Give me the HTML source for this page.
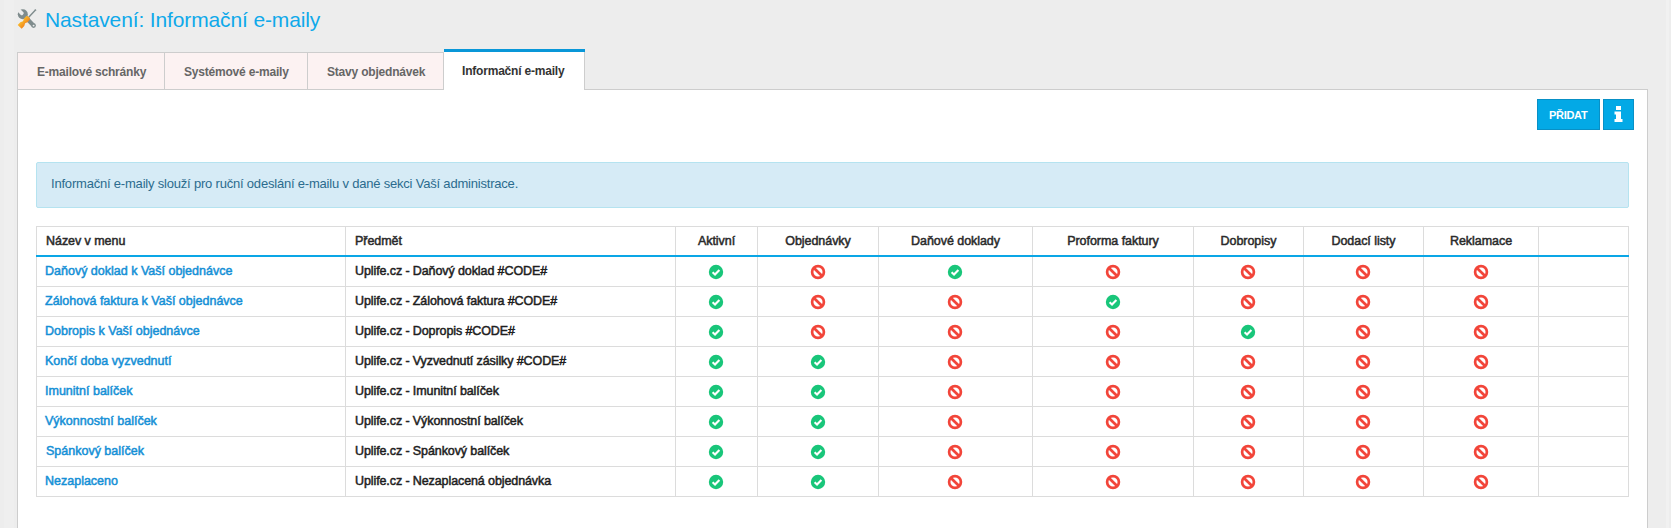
<!DOCTYPE html>
<html><head><meta charset="utf-8"><title>Nastavení: Informační e-maily</title>
<style>
html,body{margin:0;padding:0}
body{width:1671px;height:528px;overflow:hidden;background:#ededed;position:relative;font-family:"Liberation Sans",sans-serif}
.a{position:absolute}
.t{position:absolute;white-space:nowrap;line-height:14px}
.title{position:absolute;left:45px;top:8px;font-size:21px;letter-spacing:-0.13px;line-height:24px;color:#0fa9ea;white-space:nowrap}
.panel{position:absolute;left:17px;top:89px;width:1629px;height:460px;background:#fff;border:1px solid #cdcdcd}
.tab{position:absolute;top:52px;height:36px;background:#fcf2f2;border:1px solid #cdcdcd;border-right:none;border-bottom:none}
.tabt{position:absolute;font-size:12px;font-weight:bold;color:#666;letter-spacing:-0.2px;white-space:nowrap;line-height:14px}
.btn{position:absolute;top:99px;height:29px;background:#03a9e6;border:1px solid #0890c6}
.info{position:absolute;left:36px;top:162px;width:1591px;height:44px;background:#d6ebf6;border:1px solid #b5e3f0;border-radius:2px;box-sizing:content-box}
.hl{position:absolute;height:1px;background:#dcdcdc}
.vl{position:absolute;width:1px;background:#dcdcdc}
.hd{font-size:12.5px;color:#2a2a2a;letter-spacing:-0.05px;-webkit-text-stroke:0.5px #2a2a2a}
.lk{font-size:12.5px;color:#1590d6;letter-spacing:0px;-webkit-text-stroke:0.5px #1590d6}
.sb{font-size:12.5px;color:#1e1e1e;letter-spacing:-0.1px;-webkit-text-stroke:0.5px #1e1e1e}
.ic{position:absolute;display:block}
</style></head><body>

<svg class="a" style="left:16px;top:7px" width="24" height="24" viewBox="16 7 24 24">
<defs><mask id="wm" maskUnits="userSpaceOnUse" x="16" y="7" width="24" height="24">
<rect x="16" y="7" width="24" height="24" fill="#fff"/>
<g transform="translate(22.8,14.3) rotate(-45)"><rect x="-1.8" y="-8" width="3.6" height="8.3" rx="1.6" fill="#000"/></g>
<circle cx="33.6" cy="25.6" r="0.95" fill="#000"/>
</mask>
<linearGradient id="og" x1="0" y1="-3" x2="0" y2="3" gradientUnits="userSpaceOnUse"><stop offset="0" stop-color="#f9bb2c"/><stop offset="1" stop-color="#f2861c"/></linearGradient></defs>
<g fill="#7f8c8d" mask="url(#wm)">
<circle cx="22.8" cy="14.3" r="5"/>
<path d="M22.8 14.3 L33.6 25.6" stroke="#7f8c8d" stroke-width="4.2"/>
<circle cx="33.6" cy="25.6" r="2.3"/>
</g>
<g transform="translate(20.5,26) rotate(-47)">
<path d="M12 -0.7 L21.6 -0.7 L22.2 -1.1 L22.7 0 L22.2 1.1 L21.6 0.7 L12 0.7 Z" fill="#7f8c8d"/>
<path d="M-1.2 -2.7 L2.6 -2.7 L5.2 -1.45 L7.6 -2.5 L11.2 -2.5 L12.2 -1.3 L12.2 1.3 L11.2 2.5 L7.6 2.5 L5.2 1.45 L2.6 2.7 L-1.2 2.7 Z" fill="url(#og)"/>
</g>
</svg>
<div class="a" style="left:4px;top:0;width:10px;height:528px;background:#efefef"></div>
<div class="a" style="left:1666px;top:0;width:3px;height:528px;background:#f1f1f1"></div>
<div class="title">Nastavení: Informační e-maily</div>
<div class="panel"></div>
<div class="tab" style="left:17px;width:147px"></div>
<div class="tabt" style="left:37px;top:65px">E-mailové schránky</div>
<div class="tab" style="left:164px;width:143px"></div>
<div class="tabt" style="left:184px;top:65px">Systémové e-maily</div>
<div class="tab" style="left:307px;width:136px"></div>
<div class="tabt" style="left:327px;top:65px">Stavy objednávek</div>
<div class="a" style="left:443px;top:52px;width:1px;height:37px;background:#cdcdcd"></div>
<div class="a" style="left:17px;top:89px;width:427px;height:1px;background:#cdcdcd"></div>
<div class="a" style="left:444px;top:49px;width:141px;height:3px;background:#0997d8"></div>
<div class="a" style="left:444px;top:52px;width:140px;height:38px;background:#fff"></div>
<div class="a" style="left:584px;top:52px;width:1px;height:38px;background:#cdcdcd"></div>
<div class="tabt" style="left:462px;top:64px;color:#333">Informační e-maily</div>
<div class="btn" style="left:1537px;width:61px"></div>
<div class="t" style="left:1549px;top:108px;font-size:11px;font-weight:bold;letter-spacing:-0.3px;color:#fff">PŘIDAT</div>
<div class="btn" style="left:1603px;width:29px"></div>
<svg class="a" style="left:1614px;top:106px" width="9" height="17" viewBox="0 0 9 17">
<rect x="2" y="0" width="5" height="4" fill="#fff"/>
<path d="M0.5 5.5 H7 V13 H8.5 V16 H0.5 V13 H2 V8.5 H0.5 Z" fill="#fff"/></svg>
<div class="info"></div>
<div class="t" style="left:51px;top:176.5px;font-size:13px;letter-spacing:-0.2px;color:#2b6b8e">Informační e-maily slouží pro ruční odeslání e-mailu v dané sekci Vaší administrace.</div>
<div class="a" style="left:36px;top:226px;width:1593px;height:271px;background:#fff"></div>
<div class="hl" style="left:36px;top:226px;width:1593px"></div>
<div class="hl" style="left:36px;top:286px;width:1593px"></div>
<div class="hl" style="left:36px;top:316px;width:1593px"></div>
<div class="hl" style="left:36px;top:346px;width:1593px"></div>
<div class="hl" style="left:36px;top:376px;width:1593px"></div>
<div class="hl" style="left:36px;top:406px;width:1593px"></div>
<div class="hl" style="left:36px;top:436px;width:1593px"></div>
<div class="hl" style="left:36px;top:466px;width:1593px"></div>
<div class="hl" style="left:36px;top:496px;width:1593px"></div>
<div class="vl" style="left:36px;top:226px;height:271px"></div>
<div class="vl" style="left:345px;top:226px;height:271px"></div>
<div class="vl" style="left:675px;top:226px;height:271px"></div>
<div class="vl" style="left:757px;top:226px;height:271px"></div>
<div class="vl" style="left:878px;top:226px;height:271px"></div>
<div class="vl" style="left:1032px;top:226px;height:271px"></div>
<div class="vl" style="left:1193px;top:226px;height:271px"></div>
<div class="vl" style="left:1303px;top:226px;height:271px"></div>
<div class="vl" style="left:1423px;top:226px;height:271px"></div>
<div class="vl" style="left:1538px;top:226px;height:271px"></div>
<div class="vl" style="left:1628px;top:226px;height:271px"></div>
<div class="a" style="left:36px;top:255px;width:1593px;height:2px;background:#0aa6e6"></div>
<div class="t hd" style="left:46px;top:234px">Název v menu</div>
<div class="t hd" style="left:355px;top:234px">Předmět</div>
<div class="t hd" style="left:676px;width:81px;text-align:center;top:234px">Aktivní</div>
<div class="t hd" style="left:758px;width:120px;text-align:center;top:234px">Objednávky</div>
<div class="t hd" style="left:879px;width:153px;text-align:center;top:234px">Daňové doklady</div>
<div class="t hd" style="left:1033px;width:160px;text-align:center;top:234px">Proforma faktury</div>
<div class="t hd" style="left:1194px;width:109px;text-align:center;top:234px">Dobropisy</div>
<div class="t hd" style="left:1304px;width:119px;text-align:center;top:234px">Dodací listy</div>
<div class="t hd" style="left:1424px;width:114px;text-align:center;top:234px">Reklamace</div>
<div class="t lk" style="left:45px;top:264px">Daňový doklad k Vaší objednávce</div>
<div class="t sb" style="left:355px;top:264px">Uplife.cz - Daňový doklad #CODE#</div>
<div class="a" style="left:708.0px;top:264px;width:16px;height:16px"><svg class="ic" width="16" height="16" viewBox="0 0 16 16"><circle cx="8" cy="8" r="7.2" fill="#19c67a"/><path d="M4.6 8.3 L7 10.5 L11.4 5.9" fill="none" stroke="#fff" stroke-width="2.1" stroke-linecap="butt"/></svg></div>
<div class="a" style="left:809.5px;top:264px;width:16px;height:16px"><svg class="ic" width="16" height="16" viewBox="0 0 16 16"><circle cx="8" cy="8" r="5.9" fill="none" stroke="#f2453a" stroke-width="2.7"/><path d="M4.2 4.2 L11.8 11.8" stroke="#f2453a" stroke-width="2.7"/></svg></div>
<div class="a" style="left:947.0px;top:264px;width:16px;height:16px"><svg class="ic" width="16" height="16" viewBox="0 0 16 16"><circle cx="8" cy="8" r="7.2" fill="#19c67a"/><path d="M4.6 8.3 L7 10.5 L11.4 5.9" fill="none" stroke="#fff" stroke-width="2.1" stroke-linecap="butt"/></svg></div>
<div class="a" style="left:1104.5px;top:264px;width:16px;height:16px"><svg class="ic" width="16" height="16" viewBox="0 0 16 16"><circle cx="8" cy="8" r="5.9" fill="none" stroke="#f2453a" stroke-width="2.7"/><path d="M4.2 4.2 L11.8 11.8" stroke="#f2453a" stroke-width="2.7"/></svg></div>
<div class="a" style="left:1240.0px;top:264px;width:16px;height:16px"><svg class="ic" width="16" height="16" viewBox="0 0 16 16"><circle cx="8" cy="8" r="5.9" fill="none" stroke="#f2453a" stroke-width="2.7"/><path d="M4.2 4.2 L11.8 11.8" stroke="#f2453a" stroke-width="2.7"/></svg></div>
<div class="a" style="left:1355.0px;top:264px;width:16px;height:16px"><svg class="ic" width="16" height="16" viewBox="0 0 16 16"><circle cx="8" cy="8" r="5.9" fill="none" stroke="#f2453a" stroke-width="2.7"/><path d="M4.2 4.2 L11.8 11.8" stroke="#f2453a" stroke-width="2.7"/></svg></div>
<div class="a" style="left:1472.5px;top:264px;width:16px;height:16px"><svg class="ic" width="16" height="16" viewBox="0 0 16 16"><circle cx="8" cy="8" r="5.9" fill="none" stroke="#f2453a" stroke-width="2.7"/><path d="M4.2 4.2 L11.8 11.8" stroke="#f2453a" stroke-width="2.7"/></svg></div>
<div class="t lk" style="left:45px;top:294px">Zálohová faktura k Vaší objednávce</div>
<div class="t sb" style="left:355px;top:294px">Uplife.cz - Zálohová faktura #CODE#</div>
<div class="a" style="left:708.0px;top:294px;width:16px;height:16px"><svg class="ic" width="16" height="16" viewBox="0 0 16 16"><circle cx="8" cy="8" r="7.2" fill="#19c67a"/><path d="M4.6 8.3 L7 10.5 L11.4 5.9" fill="none" stroke="#fff" stroke-width="2.1" stroke-linecap="butt"/></svg></div>
<div class="a" style="left:809.5px;top:294px;width:16px;height:16px"><svg class="ic" width="16" height="16" viewBox="0 0 16 16"><circle cx="8" cy="8" r="5.9" fill="none" stroke="#f2453a" stroke-width="2.7"/><path d="M4.2 4.2 L11.8 11.8" stroke="#f2453a" stroke-width="2.7"/></svg></div>
<div class="a" style="left:947.0px;top:294px;width:16px;height:16px"><svg class="ic" width="16" height="16" viewBox="0 0 16 16"><circle cx="8" cy="8" r="5.9" fill="none" stroke="#f2453a" stroke-width="2.7"/><path d="M4.2 4.2 L11.8 11.8" stroke="#f2453a" stroke-width="2.7"/></svg></div>
<div class="a" style="left:1104.5px;top:294px;width:16px;height:16px"><svg class="ic" width="16" height="16" viewBox="0 0 16 16"><circle cx="8" cy="8" r="7.2" fill="#19c67a"/><path d="M4.6 8.3 L7 10.5 L11.4 5.9" fill="none" stroke="#fff" stroke-width="2.1" stroke-linecap="butt"/></svg></div>
<div class="a" style="left:1240.0px;top:294px;width:16px;height:16px"><svg class="ic" width="16" height="16" viewBox="0 0 16 16"><circle cx="8" cy="8" r="5.9" fill="none" stroke="#f2453a" stroke-width="2.7"/><path d="M4.2 4.2 L11.8 11.8" stroke="#f2453a" stroke-width="2.7"/></svg></div>
<div class="a" style="left:1355.0px;top:294px;width:16px;height:16px"><svg class="ic" width="16" height="16" viewBox="0 0 16 16"><circle cx="8" cy="8" r="5.9" fill="none" stroke="#f2453a" stroke-width="2.7"/><path d="M4.2 4.2 L11.8 11.8" stroke="#f2453a" stroke-width="2.7"/></svg></div>
<div class="a" style="left:1472.5px;top:294px;width:16px;height:16px"><svg class="ic" width="16" height="16" viewBox="0 0 16 16"><circle cx="8" cy="8" r="5.9" fill="none" stroke="#f2453a" stroke-width="2.7"/><path d="M4.2 4.2 L11.8 11.8" stroke="#f2453a" stroke-width="2.7"/></svg></div>
<div class="t lk" style="left:45px;top:324px">Dobropis k Vaší objednávce</div>
<div class="t sb" style="left:355px;top:324px">Uplife.cz - Dopropis #CODE#</div>
<div class="a" style="left:708.0px;top:324px;width:16px;height:16px"><svg class="ic" width="16" height="16" viewBox="0 0 16 16"><circle cx="8" cy="8" r="7.2" fill="#19c67a"/><path d="M4.6 8.3 L7 10.5 L11.4 5.9" fill="none" stroke="#fff" stroke-width="2.1" stroke-linecap="butt"/></svg></div>
<div class="a" style="left:809.5px;top:324px;width:16px;height:16px"><svg class="ic" width="16" height="16" viewBox="0 0 16 16"><circle cx="8" cy="8" r="5.9" fill="none" stroke="#f2453a" stroke-width="2.7"/><path d="M4.2 4.2 L11.8 11.8" stroke="#f2453a" stroke-width="2.7"/></svg></div>
<div class="a" style="left:947.0px;top:324px;width:16px;height:16px"><svg class="ic" width="16" height="16" viewBox="0 0 16 16"><circle cx="8" cy="8" r="5.9" fill="none" stroke="#f2453a" stroke-width="2.7"/><path d="M4.2 4.2 L11.8 11.8" stroke="#f2453a" stroke-width="2.7"/></svg></div>
<div class="a" style="left:1104.5px;top:324px;width:16px;height:16px"><svg class="ic" width="16" height="16" viewBox="0 0 16 16"><circle cx="8" cy="8" r="5.9" fill="none" stroke="#f2453a" stroke-width="2.7"/><path d="M4.2 4.2 L11.8 11.8" stroke="#f2453a" stroke-width="2.7"/></svg></div>
<div class="a" style="left:1240.0px;top:324px;width:16px;height:16px"><svg class="ic" width="16" height="16" viewBox="0 0 16 16"><circle cx="8" cy="8" r="7.2" fill="#19c67a"/><path d="M4.6 8.3 L7 10.5 L11.4 5.9" fill="none" stroke="#fff" stroke-width="2.1" stroke-linecap="butt"/></svg></div>
<div class="a" style="left:1355.0px;top:324px;width:16px;height:16px"><svg class="ic" width="16" height="16" viewBox="0 0 16 16"><circle cx="8" cy="8" r="5.9" fill="none" stroke="#f2453a" stroke-width="2.7"/><path d="M4.2 4.2 L11.8 11.8" stroke="#f2453a" stroke-width="2.7"/></svg></div>
<div class="a" style="left:1472.5px;top:324px;width:16px;height:16px"><svg class="ic" width="16" height="16" viewBox="0 0 16 16"><circle cx="8" cy="8" r="5.9" fill="none" stroke="#f2453a" stroke-width="2.7"/><path d="M4.2 4.2 L11.8 11.8" stroke="#f2453a" stroke-width="2.7"/></svg></div>
<div class="t lk" style="left:45px;top:354px">Končí doba vyzvednutí</div>
<div class="t sb" style="left:355px;top:354px">Uplife.cz - Vyzvednutí zásilky #CODE#</div>
<div class="a" style="left:708.0px;top:354px;width:16px;height:16px"><svg class="ic" width="16" height="16" viewBox="0 0 16 16"><circle cx="8" cy="8" r="7.2" fill="#19c67a"/><path d="M4.6 8.3 L7 10.5 L11.4 5.9" fill="none" stroke="#fff" stroke-width="2.1" stroke-linecap="butt"/></svg></div>
<div class="a" style="left:809.5px;top:354px;width:16px;height:16px"><svg class="ic" width="16" height="16" viewBox="0 0 16 16"><circle cx="8" cy="8" r="7.2" fill="#19c67a"/><path d="M4.6 8.3 L7 10.5 L11.4 5.9" fill="none" stroke="#fff" stroke-width="2.1" stroke-linecap="butt"/></svg></div>
<div class="a" style="left:947.0px;top:354px;width:16px;height:16px"><svg class="ic" width="16" height="16" viewBox="0 0 16 16"><circle cx="8" cy="8" r="5.9" fill="none" stroke="#f2453a" stroke-width="2.7"/><path d="M4.2 4.2 L11.8 11.8" stroke="#f2453a" stroke-width="2.7"/></svg></div>
<div class="a" style="left:1104.5px;top:354px;width:16px;height:16px"><svg class="ic" width="16" height="16" viewBox="0 0 16 16"><circle cx="8" cy="8" r="5.9" fill="none" stroke="#f2453a" stroke-width="2.7"/><path d="M4.2 4.2 L11.8 11.8" stroke="#f2453a" stroke-width="2.7"/></svg></div>
<div class="a" style="left:1240.0px;top:354px;width:16px;height:16px"><svg class="ic" width="16" height="16" viewBox="0 0 16 16"><circle cx="8" cy="8" r="5.9" fill="none" stroke="#f2453a" stroke-width="2.7"/><path d="M4.2 4.2 L11.8 11.8" stroke="#f2453a" stroke-width="2.7"/></svg></div>
<div class="a" style="left:1355.0px;top:354px;width:16px;height:16px"><svg class="ic" width="16" height="16" viewBox="0 0 16 16"><circle cx="8" cy="8" r="5.9" fill="none" stroke="#f2453a" stroke-width="2.7"/><path d="M4.2 4.2 L11.8 11.8" stroke="#f2453a" stroke-width="2.7"/></svg></div>
<div class="a" style="left:1472.5px;top:354px;width:16px;height:16px"><svg class="ic" width="16" height="16" viewBox="0 0 16 16"><circle cx="8" cy="8" r="5.9" fill="none" stroke="#f2453a" stroke-width="2.7"/><path d="M4.2 4.2 L11.8 11.8" stroke="#f2453a" stroke-width="2.7"/></svg></div>
<div class="t lk" style="left:45px;top:384px">Imunitní balíček</div>
<div class="t sb" style="left:355px;top:384px">Uplife.cz - Imunitní balíček</div>
<div class="a" style="left:708.0px;top:384px;width:16px;height:16px"><svg class="ic" width="16" height="16" viewBox="0 0 16 16"><circle cx="8" cy="8" r="7.2" fill="#19c67a"/><path d="M4.6 8.3 L7 10.5 L11.4 5.9" fill="none" stroke="#fff" stroke-width="2.1" stroke-linecap="butt"/></svg></div>
<div class="a" style="left:809.5px;top:384px;width:16px;height:16px"><svg class="ic" width="16" height="16" viewBox="0 0 16 16"><circle cx="8" cy="8" r="7.2" fill="#19c67a"/><path d="M4.6 8.3 L7 10.5 L11.4 5.9" fill="none" stroke="#fff" stroke-width="2.1" stroke-linecap="butt"/></svg></div>
<div class="a" style="left:947.0px;top:384px;width:16px;height:16px"><svg class="ic" width="16" height="16" viewBox="0 0 16 16"><circle cx="8" cy="8" r="5.9" fill="none" stroke="#f2453a" stroke-width="2.7"/><path d="M4.2 4.2 L11.8 11.8" stroke="#f2453a" stroke-width="2.7"/></svg></div>
<div class="a" style="left:1104.5px;top:384px;width:16px;height:16px"><svg class="ic" width="16" height="16" viewBox="0 0 16 16"><circle cx="8" cy="8" r="5.9" fill="none" stroke="#f2453a" stroke-width="2.7"/><path d="M4.2 4.2 L11.8 11.8" stroke="#f2453a" stroke-width="2.7"/></svg></div>
<div class="a" style="left:1240.0px;top:384px;width:16px;height:16px"><svg class="ic" width="16" height="16" viewBox="0 0 16 16"><circle cx="8" cy="8" r="5.9" fill="none" stroke="#f2453a" stroke-width="2.7"/><path d="M4.2 4.2 L11.8 11.8" stroke="#f2453a" stroke-width="2.7"/></svg></div>
<div class="a" style="left:1355.0px;top:384px;width:16px;height:16px"><svg class="ic" width="16" height="16" viewBox="0 0 16 16"><circle cx="8" cy="8" r="5.9" fill="none" stroke="#f2453a" stroke-width="2.7"/><path d="M4.2 4.2 L11.8 11.8" stroke="#f2453a" stroke-width="2.7"/></svg></div>
<div class="a" style="left:1472.5px;top:384px;width:16px;height:16px"><svg class="ic" width="16" height="16" viewBox="0 0 16 16"><circle cx="8" cy="8" r="5.9" fill="none" stroke="#f2453a" stroke-width="2.7"/><path d="M4.2 4.2 L11.8 11.8" stroke="#f2453a" stroke-width="2.7"/></svg></div>
<div class="t lk" style="left:45px;top:414px">Výkonnostní balíček</div>
<div class="t sb" style="left:355px;top:414px">Uplife.cz - Výkonnostní balíček</div>
<div class="a" style="left:708.0px;top:414px;width:16px;height:16px"><svg class="ic" width="16" height="16" viewBox="0 0 16 16"><circle cx="8" cy="8" r="7.2" fill="#19c67a"/><path d="M4.6 8.3 L7 10.5 L11.4 5.9" fill="none" stroke="#fff" stroke-width="2.1" stroke-linecap="butt"/></svg></div>
<div class="a" style="left:809.5px;top:414px;width:16px;height:16px"><svg class="ic" width="16" height="16" viewBox="0 0 16 16"><circle cx="8" cy="8" r="7.2" fill="#19c67a"/><path d="M4.6 8.3 L7 10.5 L11.4 5.9" fill="none" stroke="#fff" stroke-width="2.1" stroke-linecap="butt"/></svg></div>
<div class="a" style="left:947.0px;top:414px;width:16px;height:16px"><svg class="ic" width="16" height="16" viewBox="0 0 16 16"><circle cx="8" cy="8" r="5.9" fill="none" stroke="#f2453a" stroke-width="2.7"/><path d="M4.2 4.2 L11.8 11.8" stroke="#f2453a" stroke-width="2.7"/></svg></div>
<div class="a" style="left:1104.5px;top:414px;width:16px;height:16px"><svg class="ic" width="16" height="16" viewBox="0 0 16 16"><circle cx="8" cy="8" r="5.9" fill="none" stroke="#f2453a" stroke-width="2.7"/><path d="M4.2 4.2 L11.8 11.8" stroke="#f2453a" stroke-width="2.7"/></svg></div>
<div class="a" style="left:1240.0px;top:414px;width:16px;height:16px"><svg class="ic" width="16" height="16" viewBox="0 0 16 16"><circle cx="8" cy="8" r="5.9" fill="none" stroke="#f2453a" stroke-width="2.7"/><path d="M4.2 4.2 L11.8 11.8" stroke="#f2453a" stroke-width="2.7"/></svg></div>
<div class="a" style="left:1355.0px;top:414px;width:16px;height:16px"><svg class="ic" width="16" height="16" viewBox="0 0 16 16"><circle cx="8" cy="8" r="5.9" fill="none" stroke="#f2453a" stroke-width="2.7"/><path d="M4.2 4.2 L11.8 11.8" stroke="#f2453a" stroke-width="2.7"/></svg></div>
<div class="a" style="left:1472.5px;top:414px;width:16px;height:16px"><svg class="ic" width="16" height="16" viewBox="0 0 16 16"><circle cx="8" cy="8" r="5.9" fill="none" stroke="#f2453a" stroke-width="2.7"/><path d="M4.2 4.2 L11.8 11.8" stroke="#f2453a" stroke-width="2.7"/></svg></div>
<div class="t lk" style="left:46px;top:444px">Spánkový balíček</div>
<div class="t sb" style="left:355px;top:444px">Uplife.cz - Spánkový balíček</div>
<div class="a" style="left:708.0px;top:444px;width:16px;height:16px"><svg class="ic" width="16" height="16" viewBox="0 0 16 16"><circle cx="8" cy="8" r="7.2" fill="#19c67a"/><path d="M4.6 8.3 L7 10.5 L11.4 5.9" fill="none" stroke="#fff" stroke-width="2.1" stroke-linecap="butt"/></svg></div>
<div class="a" style="left:809.5px;top:444px;width:16px;height:16px"><svg class="ic" width="16" height="16" viewBox="0 0 16 16"><circle cx="8" cy="8" r="7.2" fill="#19c67a"/><path d="M4.6 8.3 L7 10.5 L11.4 5.9" fill="none" stroke="#fff" stroke-width="2.1" stroke-linecap="butt"/></svg></div>
<div class="a" style="left:947.0px;top:444px;width:16px;height:16px"><svg class="ic" width="16" height="16" viewBox="0 0 16 16"><circle cx="8" cy="8" r="5.9" fill="none" stroke="#f2453a" stroke-width="2.7"/><path d="M4.2 4.2 L11.8 11.8" stroke="#f2453a" stroke-width="2.7"/></svg></div>
<div class="a" style="left:1104.5px;top:444px;width:16px;height:16px"><svg class="ic" width="16" height="16" viewBox="0 0 16 16"><circle cx="8" cy="8" r="5.9" fill="none" stroke="#f2453a" stroke-width="2.7"/><path d="M4.2 4.2 L11.8 11.8" stroke="#f2453a" stroke-width="2.7"/></svg></div>
<div class="a" style="left:1240.0px;top:444px;width:16px;height:16px"><svg class="ic" width="16" height="16" viewBox="0 0 16 16"><circle cx="8" cy="8" r="5.9" fill="none" stroke="#f2453a" stroke-width="2.7"/><path d="M4.2 4.2 L11.8 11.8" stroke="#f2453a" stroke-width="2.7"/></svg></div>
<div class="a" style="left:1355.0px;top:444px;width:16px;height:16px"><svg class="ic" width="16" height="16" viewBox="0 0 16 16"><circle cx="8" cy="8" r="5.9" fill="none" stroke="#f2453a" stroke-width="2.7"/><path d="M4.2 4.2 L11.8 11.8" stroke="#f2453a" stroke-width="2.7"/></svg></div>
<div class="a" style="left:1472.5px;top:444px;width:16px;height:16px"><svg class="ic" width="16" height="16" viewBox="0 0 16 16"><circle cx="8" cy="8" r="5.9" fill="none" stroke="#f2453a" stroke-width="2.7"/><path d="M4.2 4.2 L11.8 11.8" stroke="#f2453a" stroke-width="2.7"/></svg></div>
<div class="t lk" style="left:45px;top:474px">Nezaplaceno</div>
<div class="t sb" style="left:355px;top:474px">Uplife.cz - Nezaplacená objednávka</div>
<div class="a" style="left:708.0px;top:474px;width:16px;height:16px"><svg class="ic" width="16" height="16" viewBox="0 0 16 16"><circle cx="8" cy="8" r="7.2" fill="#19c67a"/><path d="M4.6 8.3 L7 10.5 L11.4 5.9" fill="none" stroke="#fff" stroke-width="2.1" stroke-linecap="butt"/></svg></div>
<div class="a" style="left:809.5px;top:474px;width:16px;height:16px"><svg class="ic" width="16" height="16" viewBox="0 0 16 16"><circle cx="8" cy="8" r="7.2" fill="#19c67a"/><path d="M4.6 8.3 L7 10.5 L11.4 5.9" fill="none" stroke="#fff" stroke-width="2.1" stroke-linecap="butt"/></svg></div>
<div class="a" style="left:947.0px;top:474px;width:16px;height:16px"><svg class="ic" width="16" height="16" viewBox="0 0 16 16"><circle cx="8" cy="8" r="5.9" fill="none" stroke="#f2453a" stroke-width="2.7"/><path d="M4.2 4.2 L11.8 11.8" stroke="#f2453a" stroke-width="2.7"/></svg></div>
<div class="a" style="left:1104.5px;top:474px;width:16px;height:16px"><svg class="ic" width="16" height="16" viewBox="0 0 16 16"><circle cx="8" cy="8" r="5.9" fill="none" stroke="#f2453a" stroke-width="2.7"/><path d="M4.2 4.2 L11.8 11.8" stroke="#f2453a" stroke-width="2.7"/></svg></div>
<div class="a" style="left:1240.0px;top:474px;width:16px;height:16px"><svg class="ic" width="16" height="16" viewBox="0 0 16 16"><circle cx="8" cy="8" r="5.9" fill="none" stroke="#f2453a" stroke-width="2.7"/><path d="M4.2 4.2 L11.8 11.8" stroke="#f2453a" stroke-width="2.7"/></svg></div>
<div class="a" style="left:1355.0px;top:474px;width:16px;height:16px"><svg class="ic" width="16" height="16" viewBox="0 0 16 16"><circle cx="8" cy="8" r="5.9" fill="none" stroke="#f2453a" stroke-width="2.7"/><path d="M4.2 4.2 L11.8 11.8" stroke="#f2453a" stroke-width="2.7"/></svg></div>
<div class="a" style="left:1472.5px;top:474px;width:16px;height:16px"><svg class="ic" width="16" height="16" viewBox="0 0 16 16"><circle cx="8" cy="8" r="5.9" fill="none" stroke="#f2453a" stroke-width="2.7"/><path d="M4.2 4.2 L11.8 11.8" stroke="#f2453a" stroke-width="2.7"/></svg></div>
</body></html>
